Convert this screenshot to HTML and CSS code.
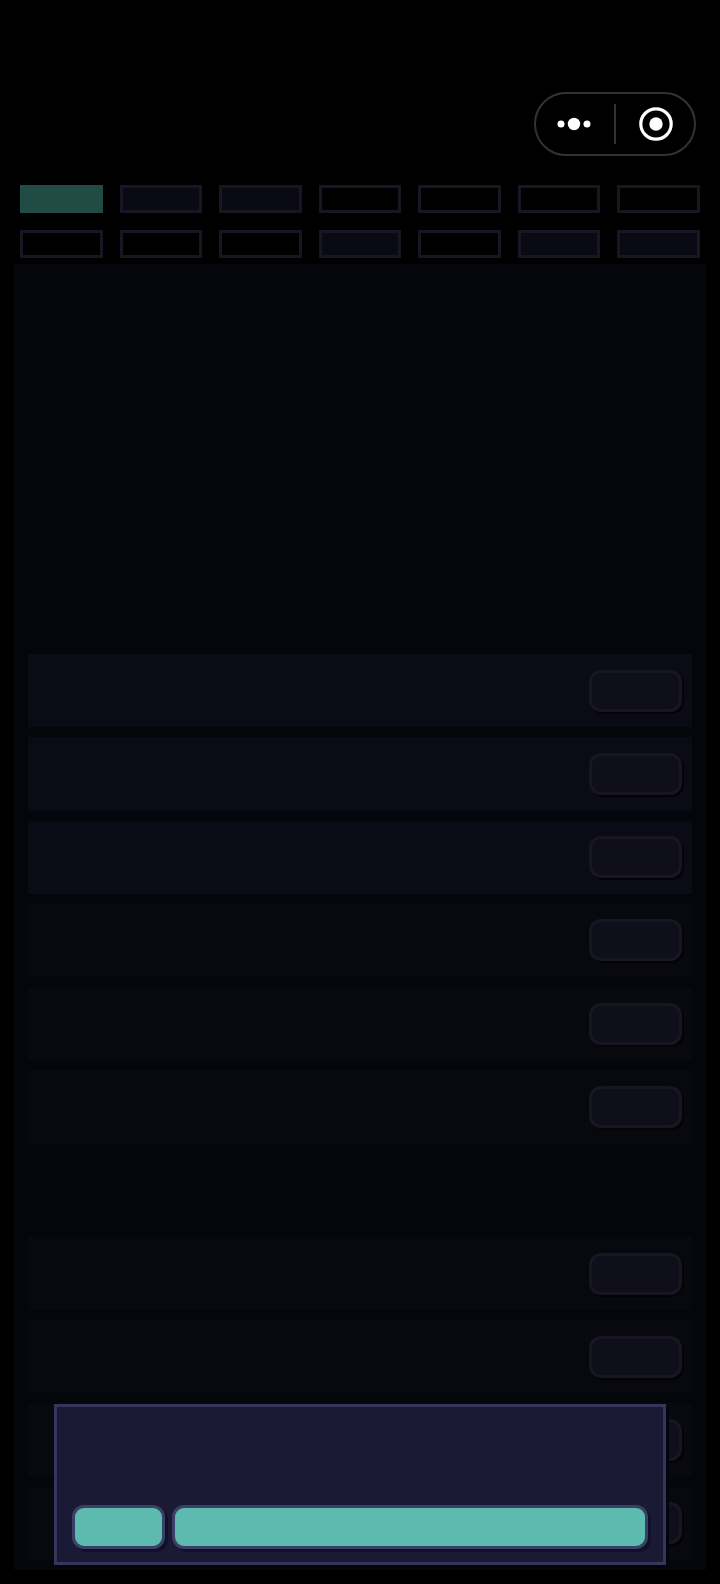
FILE: index.html
```html
<!DOCTYPE html>
<html lang="en">

<head>
	<title>Tasks</title>
	<meta charset="UTF-8">
	<meta name="viewport" content="width=device-width,initial-scale=1">
	<link rel="stylesheet" href="styles.css">
</head>

<body>
	<header class="top-bar">
		<div class="capsule">
			<button class="capsule-btn" type="button" aria-label="More">
				<svg width="36" height="36" viewBox="0 0 36 36" fill="#fff">
					<circle cx="5" cy="18" r="3.5" />
					<circle cx="18" cy="18" r="6.2" />
					<circle cx="31" cy="18" r="3.5" />
				</svg>
			</button>
			<span class="capsule-line"></span>
			<button class="capsule-btn" type="button" aria-label="Close">
				<svg width="36" height="36" viewBox="0 0 36 36">
					<circle cx="18" cy="18" r="15.2" fill="none" stroke="#fff" stroke-width="3.2" />
					<circle cx="18" cy="18" r="6.7" fill="#fff" />
				</svg>
			</button>
		</div>
	</header>
	<nav class="tabs">
		<button class="tab active" type="button" aria-label="Tab 1"></button>
		<button class="tab filled" type="button" aria-label="Tab 2"></button>
		<button class="tab filled" type="button" aria-label="Tab 3"></button>
		<button class="tab" type="button" aria-label="Tab 4"></button>
		<button class="tab" type="button" aria-label="Tab 5"></button>
		<button class="tab" type="button" aria-label="Tab 6"></button>
		<button class="tab" type="button" aria-label="Tab 7"></button>
		<button class="tab" type="button" aria-label="Tab 8"></button>
		<button class="tab" type="button" aria-label="Tab 9"></button>
		<button class="tab" type="button" aria-label="Tab 10"></button>
		<button class="tab filled" type="button" aria-label="Tab 11"></button>
		<button class="tab" type="button" aria-label="Tab 12"></button>
		<button class="tab filled" type="button" aria-label="Tab 13"></button>
		<button class="tab filled" type="button" aria-label="Tab 14"></button>
	</nav>
	<main class="panel">
		<div class="intro"></div>
		<div class="list">
			<div class="row bright"><button class="row-btn" type="button" aria-label="Open 1"></button></div>
			<div class="row bright"><button class="row-btn" type="button" aria-label="Open 2"></button></div>
			<div class="row bright"><button class="row-btn" type="button" aria-label="Open 3"></button></div>
			<div class="row"><button class="row-btn" type="button" aria-label="Open 4"></button></div>
			<div class="row"><button class="row-btn" type="button" aria-label="Open 5"></button></div>
			<div class="row"><button class="row-btn" type="button" aria-label="Open 6"></button></div>
			<div class="row-title"></div>
			<div class="row"><button class="row-btn" type="button" aria-label="Open 7"></button></div>
			<div class="row"><button class="row-btn" type="button" aria-label="Open 8"></button></div>
			<div class="row"><button class="row-btn" type="button" aria-label="Open 9"></button></div>
			<div class="row"><button class="row-btn" type="button" aria-label="Open 10"></button></div>
		</div>
	</main>
	<div class="dialog" role="dialog" aria-label="Confirm">
		<div class="dialog-text"></div>
		<div class="dialog-actions">
			<button class="dialog-btn" type="button" aria-label="Cancel"></button>
			<button class="dialog-btn wide" type="button" aria-label="Confirm"></button>
		</div>
	</div>
</body>

</html>
```
FILE: styles.css
```css
:root {
	--teal: #5cbaaf;
	--panel: #04060b;
	--dialog: #1b1a35;
	--dialog-border: #38345c;
	--dim-border: #171622;
}

* {
	box-sizing: border-box;
}

body {
	margin: 0;
	background: #000;
	color: #fff;
	font-family: "Liberation Sans", Arial, sans-serif;
}

button {
	margin: 0;
	padding: 0;
	cursor: pointer;
}

.top-bar {
	display: flex;
	justify-content: flex-end;
	padding: 92px 24px 29px;
}

.capsule {
	display: flex;
	align-items: center;
	gap: 2px;
	width: 162px;
	height: 64px;
	border: 2px solid #333;
	border-radius: 32px;
}

.capsule-btn {
	flex: 1;
	display: flex;
	align-items: center;
	justify-content: center;
	height: 100%;
	border: 0;
	background: none;
}

.capsule-line {
	width: 2px;
	height: 40px;
	background: #333;
}

.tabs {
	display: grid;
	grid-template-columns: repeat(7, 1fr);
	gap: 17px;
	padding: 0 20px 6px;
}

.tab {
	height: 28px;
	border: 3px solid var(--dim-border);
	border-radius: 0;
	background: #000;
}

.tab.filled {
	background: #0a0a14;
}

.tab.active {
	border-color: #214b45;
	background: #214b45;
}

.panel {
	margin: 0 14px 14px;
	padding: 0 14px 10px;
	background: var(--panel);
}

.intro {
	height: 390px;
}

.list {
	display: grid;
	grid-auto-rows: 1fr;
	gap: 10px;
	height: 906px;
}

.row {
	display: flex;
	align-items: center;
	justify-content: flex-end;
	padding: 0 10px;
	background: #07090e;
}

.row.bright {
	background: #0a0b14;
}

.row-btn {
	width: 93px;
	height: 42px;
	border: 3px solid var(--dim-border);
	border-radius: 12px;
	background: #0f0f1a;
	box-shadow: 2px 2px 0 #030308;
}

.dialog {
	position: fixed;
	left: 0;
	right: 0;
	bottom: 19px;
	width: 85%;
	margin: 0 auto;
	padding: 15px 15px 13px;
	border: 3px solid var(--dialog-border);
	background: var(--dialog);
	box-shadow: 3px 3px 0 #04040f;
}

.dialog-text {
	height: 83px;
}

.dialog-actions {
	display: flex;
	gap: 7px;
}

.dialog-btn {
	width: 93px;
	height: 44px;
	border: 3px solid #3a4065;
	border-radius: 12px;
	background: var(--teal);
	box-shadow: 3px 3px 0 #10102a;
}

.dialog-btn.wide {
	flex: 1;
}
```
